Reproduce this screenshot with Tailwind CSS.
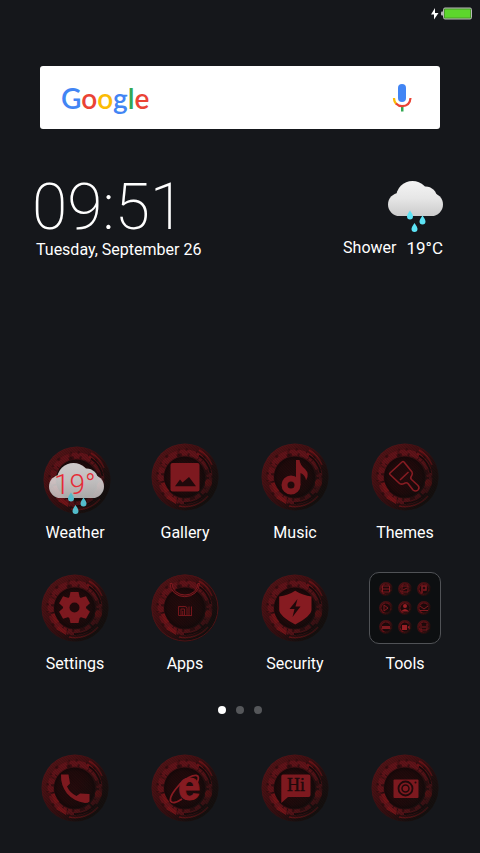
<!DOCTYPE html>
<html lang="en">
<head>
  <meta charset="UTF-8">
  <meta name="viewport" content="width=device-width, initial-scale=1.0">
  <title>Home</title>
  <script src="https://cdn.jsdelivr.net/npm/@tailwindcss/browser@4"></script>
</head>
<body class="bg-[#15171b] text-white font-['Roboto',sans-serif]">

  <!-- Shared shapes -->
  <svg class="absolute w-0 h-0" aria-hidden="true">
    <defs>
      <linearGradient id="discFill" x1="0.15" y1="0.1" x2="0.85" y2="0.8">
        <stop offset="0" stop-color="#561417"/>
        <stop offset="0.5" stop-color="#3d0f12"/>
        <stop offset="1" stop-color="#17100f"/>
      </linearGradient>
      <linearGradient id="discShade" x1="0.1" y1="0.2" x2="1" y2="0.7">
        <stop offset="0.5" stop-color="#14100f" stop-opacity="0"/>
        <stop offset="1" stop-color="#14100f" stop-opacity="0.75"/>
      </linearGradient>
      <radialGradient id="coreFill">
        <stop offset="0" stop-color="#270b0d"/>
        <stop offset="0.8" stop-color="#200a0b"/>
        <stop offset="1" stop-color="#160809"/>
      </radialGradient>
      <linearGradient id="cloudFill" gradientUnits="userSpaceOnUse" x1="0" y1="0" x2="0" y2="35">
        <stop offset="0" stop-color="#f4f4f4"/>
        <stop offset="0.5" stop-color="#e6e6e6"/>
        <stop offset="1" stop-color="#cbcbcb"/>
      </linearGradient>
      <pattern id="hatch" width="2" height="2" patternUnits="userSpaceOnUse" patternTransform="rotate(45)">
        <rect width="2" height="1" fill="#000" opacity="0.18"/>
      </pattern>
      <symbol id="disc" viewBox="0 0 68 68">
        <circle cx="34" cy="34" r="33.500" fill="url(#discFill)"/>
        <circle cx="34" cy="34" r="24.500" fill="none" stroke="#64141a" stroke-width="6" stroke-dasharray="19 2 25 1 22 3 14 2"/>
        <circle cx="34" cy="34" r="27.500" fill="none" stroke="#220b0d" stroke-width="2.500" stroke-dasharray="1 6 2 9 1 7 3 12" opacity="0.6"/>
        <circle cx="34" cy="34" r="22.500" fill="none" stroke="#1c0a0b" stroke-width="3" stroke-dasharray="2 9 1 13 5 6" opacity="0.6"/>
        <path d="M46 10.500A26 26 0 0 1 58 25M48 7A30 30 0 0 1 61 22M28 63A30 30 0 0 0 57 53" fill="none" stroke="#761519" stroke-width="1.600"/>
        <path d="M48 12.500A26 26 0 0 1 59.500 30M33 60A26 26 0 0 0 55 50" fill="none" stroke="#1b0a0b" stroke-width="1.800"/>
        <circle cx="57.500" cy="40" r="3.500" fill="#861519"/>
        <path d="M18 52l8 5-1 4-10-6zM10 40l5-1 4 8-5 3z" fill="#761519"/>
        <circle cx="33.500" cy="34" r="20.500" fill="url(#coreFill)"/>
        <circle cx="34" cy="34" r="33.500" fill="url(#discShade)"/>
        <circle cx="34" cy="34" r="33" fill="url(#hatch)"/>
      </symbol>
      <symbol id="cloud" viewBox="0 0 55 53">
        <g fill="url(#cloudFill)">
          <circle cx="11.500" cy="23.500" r="11.500"/>
          <circle cx="24.500" cy="16.500" r="16.500"/>
          <circle cx="37.500" cy="17" r="11.500"/>
          <circle cx="43.500" cy="23.500" r="11.500"/>
          <rect x="11.500" y="20" width="32" height="15"/>
        </g>
      </symbol>
      <symbol id="drops" viewBox="0 0 55 53">
        <path d="M22 29.500q3 4 3 6a3 3 0 0 1-6 0q0-2 3-6zM34.500 34.500q3 4 3 6a3 3 0 0 1-6 0q0-2 3-6zM26.500 42q3 4 3 6a3 3 0 0 1-6 0q0-2 3-6z" fill="#5de3f5"/>
      </symbol>
    </defs>
  </svg>

  <main class="flex min-h-screen flex-col">
    <!-- Status bar -->
    <header class="flex h-[26px] items-center justify-end pr-2">
      <svg class="h-4 w-[42px]" viewBox="0 0 42 16" role="img" aria-label="Battery charging">
        <path d="M5 3L1 9.500h3v5L8.500 8H5z" fill="#fff"/>
        <rect x="11" y="6.500" width="3" height="4" rx="1" fill="#b5b5b5"/>
        <rect x="13.500" y="3" width="28" height="11" rx="1.500" fill="#4b9a2a" stroke="#b9b9b9"/>
        <rect x="15" y="4.500" width="25" height="8" fill="#5dd62c"/>
      </svg>
    </header>

    <!-- Search -->
    <form class="mx-10 mt-10 flex h-[63px] items-center rounded-[3px] bg-white pr-[25px] pl-[21px]">
      <label for="search" class="font-['Lato',sans-serif] text-[28px] leading-9 font-semibold"><span class="text-[#4285f4]">G</span><span class="text-[#ea4335]">o</span><span class="text-[#fbbc05]">o</span><span class="text-[#4285f4]">g</span><span class="text-[#34a853]">l</span><span class="text-[#ea4335]">e</span></label>
      <input id="search" type="text" class="min-w-0 flex-1 bg-transparent px-3 text-black outline-none">
      <button type="button" aria-label="Voice search">
        <svg class="h-7 w-[26px]" viewBox="0 0 26 28">
          <rect x="9" y="0" width="8" height="18" rx="4" fill="#4285f4"/>
          <path d="M12 22h2.500v5.500h-2.500z" fill="#34a853"/>
          <path d="M5 14Q5 18 7.500 20" fill="none" stroke="#fbbc05" stroke-width="2.200"/>
          <path d="M7 19.500Q9.500 22.200 13 22.200Q21 22 21.500 14" fill="none" stroke="#ea4335" stroke-width="2.200"/>
        </svg>
      </button>
    </form>

    <!-- Clock and weather -->
    <section class="mt-12 flex justify-between pr-[37px] pl-9">
      <div>
        <p class="-ml-1 text-[64px] leading-[61px] font-extralight">09:51</p>
        <p class="text-base leading-6">Tuesday, September 26</p>
      </div>
      <div class="flex flex-col items-end">
        <svg class="mt-1 h-[53px] w-[55px]" viewBox="0 0 55 53" aria-hidden="true">
          <use href="#cloud" width="55" height="53"/>
          <use href="#drops" width="55" height="53"/>
        </svg>
        <p class="mt-0.5 flex gap-2.5 text-base leading-6"><span>Shower</span><span class="text-[17px]">19°C</span></p>
      </div>
    </section>

    <!-- Apps -->
    <nav class="mt-auto grid grid-cols-4 gap-y-[29px] px-5 text-base leading-6">
      <button class="flex flex-col items-center gap-2.5">
        <svg class="size-[68px] overflow-visible" viewBox="0 0 68 68">
          <use href="#disc" x="2" y="3" width="68" height="68"/>
          <g opacity="0.82">
            <use href="#cloud" x="8" y="20" width="55" height="53"/>
            <use href="#drops" x="8" y="20" width="55" height="53"/>
          </g>
          <text x="13" y="51" fill="#e62b36" class="text-[28px] font-light">19°</text>
        </svg>
        <span>Weather</span>
      </button>
      <button class="flex flex-col items-center gap-2.5">
        <svg class="size-[68px]" viewBox="0 0 68 68">
          <use href="#disc" width="68" height="68"/>
          <rect x="19.500" y="20" width="29" height="28.500" rx="2" fill="#7d191f"/>
          <path d="M24 43.300L29 36.500L31.500 39.500L38 34L45 43.300Z" fill="#20090b"/>
        </svg>
        <span>Gallery</span>
      </button>
      <button class="flex flex-col items-center gap-2.5">
        <svg class="size-[68px]" viewBox="0 0 68 68">
          <use href="#disc" width="68" height="68"/>
          <circle cx="30" cy="42" r="6.500" fill="none" stroke="#7d191f" stroke-width="6"/>
          <path d="M35 17h3.500Q39 22 44 26Q49 31 45 37.500Q44.500 32 39.500 30V42h-4.500z" fill="#7d191f"/>
        </svg>
        <span>Music</span>
      </button>
      <button class="flex flex-col items-center gap-2.5">
        <svg class="size-[68px]" viewBox="0 0 68 68">
          <use href="#disc" width="68" height="68"/>
          <path d="M19 30L31 19Q32 18 33 19L41 29Q42 31 40.500 33Q39 35 40.500 36.500L47 42.500Q49 45 47 47Q44.500 49 42 47L37 40.500Q35.500 39 33 40.500Q30 42 28 40L19 31.500Q18.300 30.700 19 30ZM29 37L37.500 29" fill="none" stroke="#861c22" stroke-width="1.600" stroke-linejoin="round"/>
        </svg>
        <span>Themes</span>
      </button>

      <button class="flex flex-col items-center gap-2.5">
        <svg class="size-[68px]" viewBox="0 0 68 68">
          <use href="#disc" width="68" height="68"/>
          <g transform="translate(33.500 33.500)" fill="#7d191f">
            <path d="M-5.500 -9L-4 -15.500H4L5.500 -9L5.500 9L4 15.500H-4L-5.500 9Z"/>
            <path d="M-5.500 -9L-4 -15.500H4L5.500 -9L5.500 9L4 15.500H-4L-5.500 9Z" transform="rotate(60)"/>
            <path d="M-5.500 -9L-4 -15.500H4L5.500 -9L5.500 9L4 15.500H-4L-5.500 9Z" transform="rotate(120)"/>
            <circle r="11.500"/>
            <circle r="5" fill="#20090b"/>
          </g>
        </svg>
        <span>Settings</span>
      </button>
      <button class="flex flex-col items-center gap-2.5">
        <svg class="size-[68px]" viewBox="0 0 68 68">
          <use href="#disc" width="68" height="68"/>
          <circle cx="34" cy="34" r="33" fill="none" stroke="#4c1316"/>
          <path d="M21 9.500A13 11.500 0 0 0 47 9.500L48.500 9.500A14.500 13 0 0 1 19 9.500Z" fill="#3a0c0f" stroke="#7d191f"/>
          <path d="M27.500 41.500V32.500H34Q36 32.500 36 34.500V41.500M30 41.500V35H33.500V41.500M31.700 37V41.500M38 32.500V41.500M40.500 32.500V41.500M27.500 41.500H41" fill="none" stroke="#73161b"/>
        </svg>
        <span>Apps</span>
      </button>
      <button class="flex flex-col items-center gap-2.5">
        <svg class="size-[68px]" viewBox="0 0 68 68">
          <use href="#disc" width="68" height="68"/>
          <path d="M34.200 16.700Q42 21.500 50.500 22.500V36Q50 42 34.200 50.500Q18.500 42 18.200 36V22.500Q27 21.500 34.200 16.700Z" fill="#861b21"/>
          <path d="M36.500 25L28.500 35H33.500L31.500 43L39.500 32.500H34.500Z" fill="#20090b"/>
        </svg>
        <span>Security</span>
      </button>
      <button class="flex flex-col items-center gap-2">
        <span class="-mt-0.5 grid size-[72px] grid-cols-3 place-items-center rounded-[10px] border border-[#505256] bg-[#0d0f11] p-1.5">
          <svg class="size-3.5" viewBox="0 0 14 14"><use href="#disc" width="14" height="14"/><path d="M3.500 4h7v6h-7zM4 7h6" fill="none" stroke="#7d191f"/></svg>
          <svg class="size-3.5" viewBox="0 0 14 14"><use href="#disc" width="14" height="14"/><path d="M4 4h6v6h-6zM5 8l4-2" fill="none" stroke="#7d191f"/></svg>
          <svg class="size-3.5" viewBox="0 0 14 14"><use href="#disc" width="14" height="14"/><path d="M5 11V4h4v4H6" fill="none" stroke="#7d191f" stroke-width="1.500"/></svg>
          <svg class="size-3.5" viewBox="0 0 14 14"><use href="#disc" width="14" height="14"/><path d="M5 4v6l4-3z" fill="none" stroke="#7d191f"/></svg>
          <svg class="size-3.5" viewBox="0 0 14 14"><use href="#disc" width="14" height="14"/><circle cx="7" cy="5" r="2" fill="#961e24"/><path d="M3 10.500q4-5 8 0z" fill="#961e24"/></svg>
          <svg class="size-3.5" viewBox="0 0 14 14"><use href="#disc" width="14" height="14"/><path d="M3 5l4 3 4-3M3 9.500h8" fill="none" stroke="#7d191f"/></svg>
          <svg class="size-3.5" viewBox="0 0 14 14"><use href="#disc" width="14" height="14"/><path d="M3 6h8v3h-8z" fill="#7d191f"/></svg>
          <svg class="size-3.5" viewBox="0 0 14 14"><use href="#disc" width="14" height="14"/><path d="M4 5h5v5h-5zM9.500 7l2-1.500v4z" fill="#961e24"/></svg>
          <svg class="size-3.5" viewBox="0 0 14 14"><use href="#disc" width="14" height="14"/><path d="M4 4v6h6v-6M5 7h4" fill="none" stroke="#7d191f"/></svg>
        </span>
        <span>Tools</span>
      </button>
    </nav>

    <!-- Page dots -->
    <div class="mt-[30px] flex justify-center gap-2.5">
      <span class="size-2 rounded-full bg-white"></span>
      <span class="size-2 rounded-full bg-[#55575a]"></span>
      <span class="size-2 rounded-full bg-[#55575a]"></span>
    </div>

    <!-- Dock -->
    <nav class="mt-10 mb-[31px] grid grid-cols-4 justify-items-center px-5">
      <button aria-label="Phone">
        <svg class="size-[68px]" viewBox="0 0 68 68">
          <use href="#disc" width="68" height="68"/>
          <path d="M20 20.500H27.500L29 29.500L26 32.500Q29 39 35.500 42L39 39.500L48.500 40V47.500Q47.500 49 44 49Q33 47.500 26 39.500Q19.500 31 20 20.500Z" fill="#7d191f"/>
        </svg>
      </button>
      <button aria-label="Browser">
        <svg class="size-[68px]" viewBox="0 0 68 68">
          <use href="#disc" width="68" height="68"/>
          <text x="38" y="46" text-anchor="middle" fill="#861b21" stroke="#861b21" class="font-['Liberation_Sans',sans-serif] text-[40px] font-bold">e</text>
          <path d="M46 29Q49 22 45.500 21.500Q39 21 29 30Q18 42 19.500 47Q22 51 31 45" fill="none" stroke="#861b21" stroke-width="1.800"/>
        </svg>
      </button>
      <button aria-label="Messages">
        <svg class="size-[68px]" viewBox="0 0 68 68">
          <use href="#disc" width="68" height="68"/>
          <path d="M22 20.500H47.500Q49.500 20.500 49.500 22.500V41Q49.500 43 47.500 43H27L20.300 49V22.500Q20.300 20.500 22 20.500Z" fill="#7d191f"/>
          <text x="35" y="37" text-anchor="middle" fill="#20090b" stroke="#20090b" stroke-width="0.400" class="font-['Liberation_Serif',serif] text-[18px]">Hi</text>
        </svg>
      </button>
      <button aria-label="Camera">
        <svg class="size-[68px]" viewBox="0 0 68 68">
          <use href="#disc" width="68" height="68"/>
          <rect x="22.500" y="25.500" width="25" height="18.500" rx="1" fill="#7d191f"/>
          <circle cx="34.500" cy="34.500" r="7" fill="none" stroke="#20090b" stroke-width="1.800"/>
          <circle cx="34.500" cy="34.500" r="3.500" fill="none" stroke="#20090b" stroke-width="1.500"/>
          <circle cx="44.500" cy="28.500" r="1" fill="#20090b"/>
        </svg>
      </button>
    </nav>
  </main>

</body>
</html>
